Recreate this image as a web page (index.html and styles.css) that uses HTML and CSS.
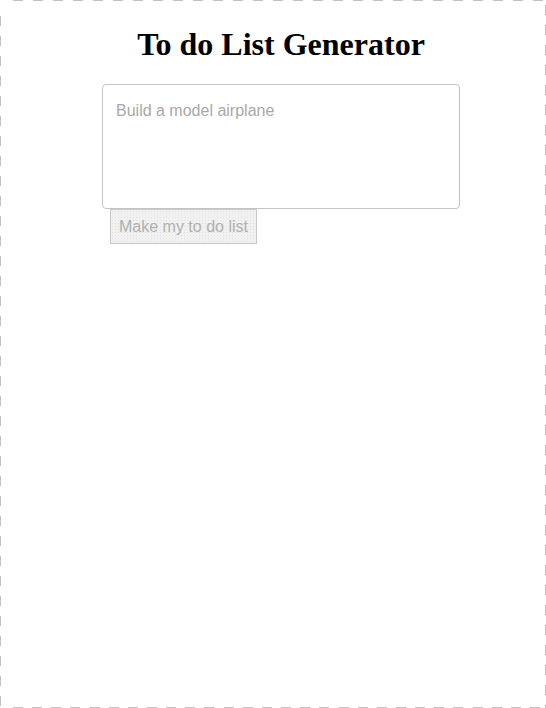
FILE: index.html
```html
<!DOCTYPE html>
<html lang="en">
<head>
<meta charset="utf-8">
<title>To do List Generator</title>
<link rel="stylesheet" href="styles.css">
</head>
<body>
<div class="frame">
  <main class="app">
    <h1 class="title">To do List Generator</h1>
    <form class="form">
      <textarea class="prompt" placeholder="Build a model airplane"></textarea>
      <button type="button" class="make-btn" disabled>Make my to do list</button>
    </form>
  </main>
</div>
</body>
</html>
```
FILE: styles.css
```css
html, body {
  margin: 0;
  padding: 0;
  background: #ffffff;
}

.frame {
  box-sizing: border-box;
  width: 546px;
  height: 708px;
  padding: 26px 0 0 16px;
  background-image:
    repeating-linear-gradient(to right, #c2c2c2 0 10px, transparent 10px 20px),
    repeating-linear-gradient(to right, #c2c2c2 0 10px, transparent 10px 19.15px),
    repeating-linear-gradient(to bottom, #c2c2c2 0 10px, transparent 10px 20px),
    repeating-linear-gradient(to bottom, #c2c2c2 0 10px, transparent 10px 20px);
  background-size: 100% 1px, 100% 1px, 1px 100%, 1px 100%;
  background-position: 13px 0, 13px 707px, 0 16px, 545px 5px;
  background-repeat: no-repeat;
}

.app {
  display: flex;
  flex-direction: column;
  align-items: center;
}

.title {
  margin: 0;
  font-family: "Liberation Serif", "Times New Roman", serif;
  font-weight: bold;
  font-size: 32px;
  color: #000;
}

.form {
  margin-top: 21px;
  width: 358px;
  display: flex;
  flex-direction: column;
  align-items: flex-start;
}

.prompt {
  box-sizing: border-box;
  width: 358px;
  height: 125px;
  margin: 0;
  padding: 17px 13px;
  border: 1px solid #c4c4c4;
  border-radius: 4px;
  font-family: "Liberation Sans", Arial, sans-serif;
  font-size: 16px;
  color: #333;
  resize: none;
  outline: none;
  display: block;
}

.prompt::placeholder {
  color: #a8a8a8;
}

.make-btn {
  box-sizing: border-box;
  height: 35px;
  margin: 0 0 0 8px;
  padding: 0 8px;
  border: 1px solid #c8c8c8;
  border-radius: 0;
  background-color: #f1f1f1;
  background-image: radial-gradient(#e2e2e2 0.6px, transparent 0.8px);
  background-size: 3px 3px;
  font-family: "Liberation Sans", Arial, sans-serif;
  font-size: 16px;
  color: #b0b0b0;
}
```
